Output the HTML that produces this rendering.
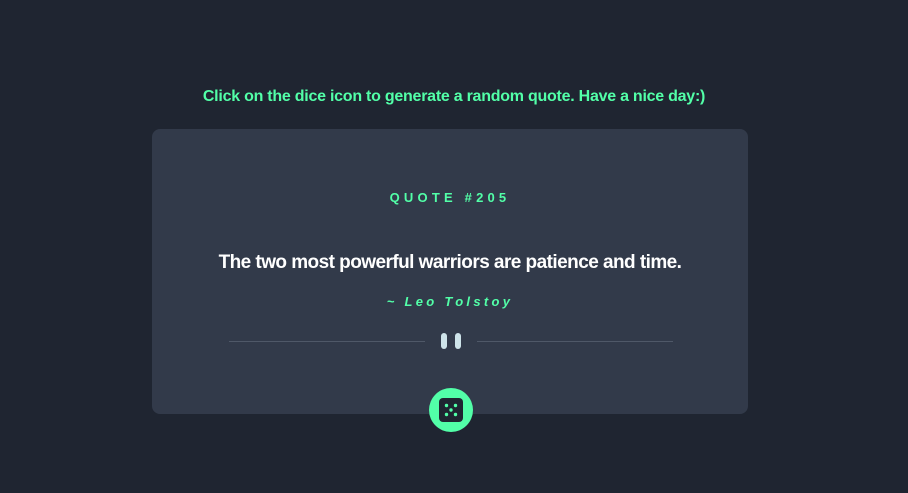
<!DOCTYPE html>
<html><head><style>
body{margin:0;width:908px;height:493px;background:#1f2531;font-family:"Liberation Sans",sans-serif;position:relative;overflow:hidden}
.top{position:absolute;top:88px;left:0;width:908px;text-align:center;color:#52ffa8;font-size:16px;font-weight:bold;letter-spacing:-0.25px}
.card{position:absolute;left:152px;top:129px;width:596px;height:285px;background:#323a4a;border-radius:8px}
.num{position:absolute;top:61px;width:100%;text-align:center;color:#52ffa8;font-size:13px;font-weight:bold;letter-spacing:4.2px}
.q{position:absolute;top:123px;width:100%;text-align:center;color:#fff;font-size:19px;font-weight:bold;letter-spacing:-0.55px}
.a{position:absolute;top:165px;width:100%;text-align:center;color:#52ffa8;font-size:13px;font-weight:bold;font-style:italic;letter-spacing:3.3px}
.line{position:absolute;top:212px;height:1px;background:#4f5868}
.bar{position:absolute;top:204px;width:6px;height:16px;border-radius:3px;background:#cee3e9}
.dice{position:absolute;left:429px;top:388px;width:44px;height:44px;border-radius:50%;background:#52ffa8}
</style></head><body>
<div class="top">Click on the dice icon to generate a random quote. Have a nice day:)</div>
<div class="card">
<div class="num">QUOTE #205</div>
<div class="q">The two most powerful warriors are patience and time.</div>
<div class="a">~ Leo Tolstoy</div>
<div class="line" style="left:77px;width:196px"></div>
<div class="line" style="left:325px;width:196px"></div>
<div class="bar" style="left:289px"></div>
<div class="bar" style="left:303px"></div>
</div>
<div class="dice"><svg width="44" height="44" viewBox="0 0 44 44"><rect x="10" y="10" width="24" height="24" rx="4" fill="#1f2531"/><g fill="#52ffa8"><circle cx="17.5" cy="17.5" r="1.7"/><circle cx="26.5" cy="17.5" r="1.7"/><circle cx="22" cy="22" r="1.7"/><circle cx="17.5" cy="26.5" r="1.7"/><circle cx="26.5" cy="26.5" r="1.7"/></g></svg></div>
</body></html>
